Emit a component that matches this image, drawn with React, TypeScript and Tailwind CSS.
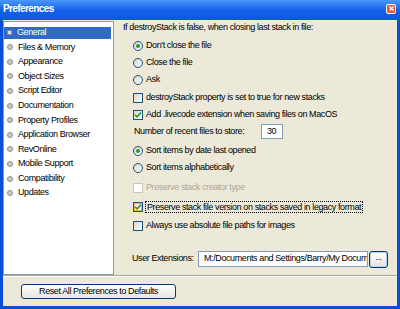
import React from "react";

const items = [
  "General",
  "Files & Memory",
  "Appearance",
  "Object Sizes",
  "Script Editor",
  "Documentation",
  "Property Profiles",
  "Application Browser",
  "RevOnline",
  "Mobile Support",
  "Compatibility",
  "Updates",
];

const Radio = ({ checked }: { checked?: boolean }) => (
  <span className="flex h-[10px] w-[10px] shrink-0 items-center justify-center rounded-full border border-[#1c5180] bg-linear-to-br from-[#d4d4cf] to-white">
    {checked && <span className="h-[4px] w-[4px] rounded-full bg-[#21a121]" />}
  </span>
);

const Check = ({ checked, hover, disabled }: { checked?: boolean; hover?: boolean; disabled?: boolean }) => (
  <span
    className={
      disabled
        ? "flex h-[10px] w-[10px] shrink-0 border border-[#cac8bb] bg-white"
        : hover
        ? "flex h-[10px] w-[10px] shrink-0 items-center justify-center border border-[#1c5180] bg-[#fdf3d9] shadow-[inset_0_0_0_1px_#f8b636]"
        : "flex h-[10px] w-[10px] shrink-0 items-center justify-center border border-[#1c5180] bg-linear-to-br from-[#d4d4cf] to-white"
    }
  >
    {checked && (
      <svg width="8" height="8" viewBox="0 0 8 8">
        <path d="M1 3.8 L3 5.8 L7 1.6" fill="none" stroke="#21a121" strokeWidth="1.6" />
      </svg>
    )}
  </span>
);

export default function App() {
  return (
    <div
      className="flex h-[309px] w-[400px] flex-col overflow-hidden bg-[#0b4fd6] text-[9px] tracking-[-0.4px] text-black"
      style={{ fontFamily: '"Liberation Sans", Arial, sans-serif' }}
    >
      {/* title bar */}
      <div className="flex h-[20px] items-center justify-between bg-linear-to-b from-[#4a97fa] via-[#1462ea] to-[#0a58e2] pl-[3px] pr-[4px]">
        <span className="pb-[4px] text-[10px] font-bold tracking-[-0.6px] text-white">Preferences</span>
        <span className="mb-[3px] flex h-[10px] w-[10px] items-center justify-center rounded-[2px] border border-white bg-[#e35a36]">
          <svg width="5" height="5" viewBox="0 0 5 5">
            <path d="M0.5 0.5 L4.5 4.5 M4.5 0.5 L0.5 4.5" stroke="white" strokeWidth="1.3" />
          </svg>
        </span>
      </div>

      <div className="mx-[3px] mb-[3px] flex flex-1 flex-col bg-[#ece9d8]">
        <div className="flex h-[255px]">
          {/* list */}
          <div className="mt-[1px] w-[111px] border border-[#7f9db9] bg-white pt-[3.4px]">
            {items.map((it, i) => (
              <div key={it} className="flex h-[14.6px] items-center">
                <div
                  className={
                    i === 0
                      ? "mr-[2px] flex h-[12px] flex-1 items-center bg-[#316ac5] text-white"
                      : "mr-[2px] flex h-[12px] flex-1 items-center"
                  }
                >
                  {i === 0 ? (
                    <span className="ml-[3px] h-[5px] w-[5px] border border-[#8b8b8b] bg-[#dedede]" />
                  ) : (
                    <span className="ml-[3px] h-[6px] w-[6px] rounded-full border border-[#8e8e8e] bg-[#c8c8c8]" />
                  )}
                  <span className="ml-[5px]">{it}</span>
                </div>
              </div>
            ))}
          </div>

          {/* right */}
          <div className="flex flex-1 flex-col pl-[9px]">
            <div className="mt-[1px] flex h-[13px] items-center">
              If destroyStack is false, when closing last stack in file:
            </div>
            <div className="mt-[5px] flex h-[13px] items-center gap-[3px] pl-[10px]">
              <Radio checked />
              <span>Don't close the file</span>
            </div>
            <div className="mt-[4px] flex h-[13px] items-center gap-[3px] pl-[10px]">
              <Radio />
              <span>Close the file</span>
            </div>
            <div className="mt-[4px] flex h-[13px] items-center gap-[3px] pl-[10px]">
              <Radio />
              <span>Ask</span>
            </div>
            <div className="mt-[5.5px] flex h-[13px] items-center gap-[3px] pl-[10px]">
              <Check />
              <span>destroyStack property is set to true for new stacks</span>
            </div>
            <div className="mt-[3.5px] flex h-[13px] items-center gap-[3px] pl-[10px]">
              <Check checked />
              <span>Add .livecode extension when saving files on MacOS</span>
            </div>
            <div className="mt-[3px] flex h-[15px] items-center pl-[11px]">
              <span className="w-[127px]">Number of recent files to store:</span>
              <span className="flex h-[15px] w-[22px] items-center border border-[#7f9db9] bg-white pl-[5px]">30</span>
            </div>
            <div className="mt-[5px] flex h-[13px] items-center gap-[3px] pl-[10px]">
              <Radio checked />
              <span>Sort items by date last opened</span>
            </div>
            <div className="mt-[4px] flex h-[13px] items-center gap-[3px] pl-[10px]">
              <Radio />
              <span>Sort items alphabetically</span>
            </div>
            <div className="mt-[7px] flex h-[13px] items-center gap-[3px] pl-[10px]">
              <Check disabled />
              <span className="text-[#aca899]">Preserve stack creator type</span>
            </div>
            <div className="mt-[6.5px] flex h-[13px] items-center gap-[2px] pl-[10px]">
              <Check checked hover />
              <span className="border border-dotted border-black px-[1px] leading-[10px]">
                Preserve stack file version on stacks saved in legacy format
              </span>
            </div>
            <div className="mt-[5.5px] flex h-[13px] items-center gap-[3px] pl-[10px]">
              <Check />
              <span>Always use absolute file paths for images</span>
            </div>
            <div className="mt-[18.5px] flex h-[17px] items-center pl-[9px]">
              <span className="w-[66px]">User Extensions:</span>
              <span className="flex h-[16px] w-[170px] items-center overflow-hidden whitespace-nowrap border border-[#7f9db9] bg-white pl-[5px]">
                M:/Documents and Settings/Barry/My Documer
              </span>
              <span className="ml-[1px] flex h-[17px] w-[19px] items-center justify-center rounded-[3px] border border-[#003c74] bg-linear-to-b from-white to-[#e3e2dc] pb-[4px] leading-none shadow-[inset_0_0_0_1px_#b8d0f5]">
                ...
              </span>
            </div>
          </div>
        </div>

        <div className="h-[2px] border-t border-b border-t-[#aca899] border-b-white" />

        <div className="mt-[7px] pl-[18px]">
          <div className="flex h-[15px] w-[155px] items-center justify-center rounded-[3px] border border-[#003c74] bg-linear-to-b from-white to-[#e6e5df]">
            Reset All Preferences to Defaults
          </div>
        </div>
      </div>
    </div>
  );
}
